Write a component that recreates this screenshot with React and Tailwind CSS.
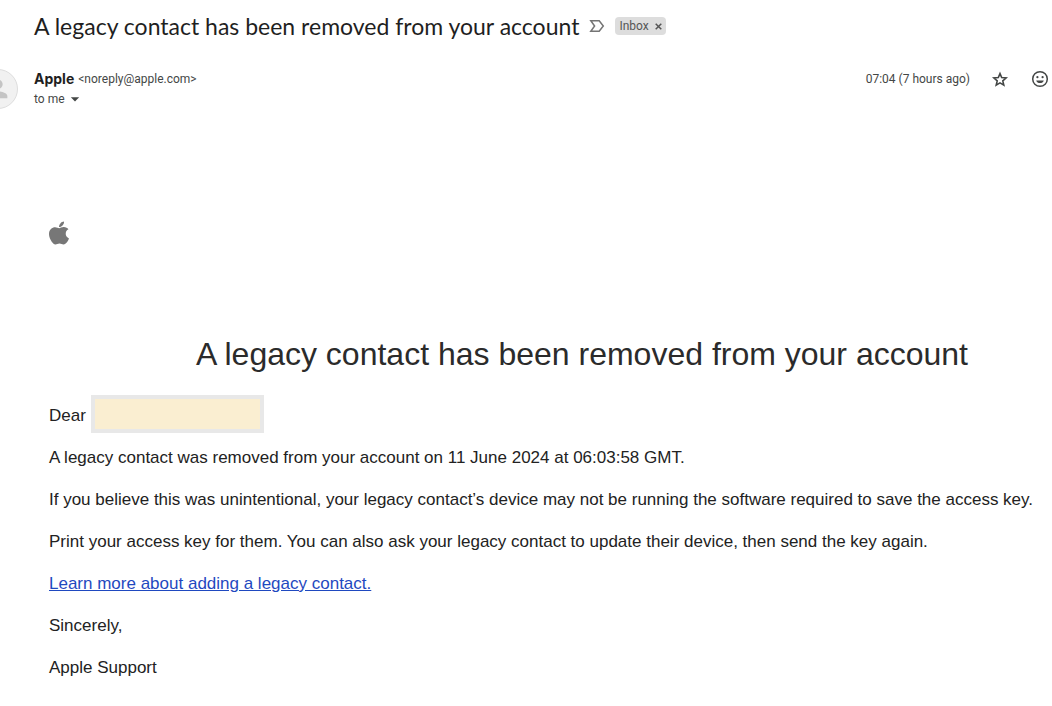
import { MdArrowDropDown, MdPerson } from 'react-icons/md'

const subject = 'A legacy contact has been removed from your account'

const paragraphs = [
  'A legacy contact was removed from your account on 11 June 2024 at 06:03:58 GMT.',
  'If you believe this was unintentional, your legacy contact’s device may not be running the software required to save the access key.',
  'Print your access key for them. You can also ask your legacy contact to update their device, then send the key again.',
]

function AppleLogo() {
  return (
    <svg width="20" height="24" viewBox="0 0 376 470" preserveAspectRatio="none" fill="currentColor" role="img" aria-label="Apple">
      <path d="M314.700 248.700c-.2-36.700 16.400-64.400 50-84.800-18.800-26.900-47.200-41.700-84.700-44.600-35.500-2.800-74.300 20.700-88.500 20.700-15 0-49.400-19.700-76.400-19.700C59.300 121.200 0 164.800 0 253.500c0 26.200 4.800 53.300 14.400 81.200 12.800 36.700 59 126.700 107.200 125.200 25.200-.6 43-17.900 75.800-17.900 31.800 0 48.300 17.900 76.400 17.900 48.600-.7 90.400-82.500 102.600-119.300-65.200-30.700-61.700-90-61.700-91.900zM258.100 84.500c27.300-32.400 24.800-61.900 24-72.500-24.100 1.400-52 16.400-67.900 34.900-17.500 19.800-27.800 44.300-25.600 71.900 26.100 2 49.900-11.400 69.500-34.300z" />
    </svg>
  )
}

function StarIcon() {
  return (
    <svg width="20" height="20" viewBox="0 0 20 20" fill="none" stroke="currentColor" strokeWidth="1.6">
      <path d="M10 4.600l1.700 4 4.400.4-3.300 2.900 1 4.300-3.800-2.300-3.800 2.300 1-4.300L3.900 9l4.400-.4z" />
    </svg>
  )
}

function SmileIcon() {
  return (
    <svg width="20" height="20" viewBox="0 0 20 20" fill="none" stroke="currentColor" strokeWidth="1.5">
      <circle cx="10" cy="10" r="7.300" />
      <circle cx="7.400" cy="8.200" r="1.100" fill="currentColor" stroke="none" />
      <circle cx="12.600" cy="8.200" r="1.100" fill="currentColor" stroke="none" />
      <path d="M6.200 11.400h7.600c-.6 1.700-2 2.700-3.800 2.700s-3.200-1-3.800-2.700z" fill="currentColor" stroke="none" />
    </svg>
  )
}

function SubjectBar() {
  return (
    <header className="flex items-center pl-[34px] pt-2.5">
      <h1 className="text-[23px] leading-8 text-[#1f1f1f]">{subject}</h1>
      <button type="button" aria-label="Mark as important" className="ml-2.5 text-[#757575]">
        <svg width="16" height="14" viewBox="0 0 16 14" fill="none" stroke="currentColor" strokeWidth="1.5">
          <path d="M1.800 1.700h8.400L14.300 7l-4.100 5.300H1.800L5.600 7z" />
        </svg>
      </button>
      <div className="ml-2.5 flex h-[18px] items-center gap-1.5 rounded bg-[#dddddd] px-1 font-[Roboto,sans-serif] text-xs text-[#555555]">
        <span>Inbox</span>
        <button type="button" aria-label="Remove label Inbox">
          <svg width="7" height="7" viewBox="0 0 7 7" stroke="currentColor" strokeWidth="1.5">
            <path d="M0.700 0.700l5.600 5.600M6.300 0.700L0.700 6.300" />
          </svg>
        </button>
      </div>
    </header>
  )
}

function SenderRow() {
  return (
    <div className="flex items-start pt-[27px] text-[#444746]">
      {/* Avatar, cut by the left edge */}
      <div className="-ml-[22px] flex size-10 shrink-0 items-center justify-center rounded-full border border-[#dddddd] bg-[#f1f1f1] text-[#c4c4c4]">
        <MdPerson size={28} />
      </div>

      <div className="ml-4 font-[Roboto,sans-serif] text-xs">
        <div className="flex items-center gap-1 leading-5">
          <span className="font-[Inter,sans-serif] text-sm font-bold text-[#1f1f1f]">Apple</span>
          <span>&lt;noreply@apple.com&gt;</span>
        </div>
        <button type="button" className="flex items-center leading-5">
          to me
          <MdArrowDropDown size={20} />
        </button>
      </div>

      <div className="ml-auto flex h-5 items-center pr-0.5">
        <time className="font-[Roboto,sans-serif] text-xs">07:04 (7 hours ago)</time>
        <button type="button" aria-label="Star" className="ml-5">
          <StarIcon />
        </button>
        <button type="button" aria-label="Add reaction" className="ml-5">
          <SmileIcon />
        </button>
      </div>
    </div>
  )
}

function MessageBody() {
  return (
    <main className="pb-6 pl-[49px] font-['Liberation_Sans',Arial,sans-serif] text-[17px] leading-[26px] text-[#222222]">
      <div className="pt-28 text-[#777777]">
        <AppleLogo />
      </div>

      <h2 className="mt-[89px] pb-5 pl-[63px] text-center text-[32px] leading-10 text-[#2b2b2b]">{subject}</h2>

      <div className="flex items-start gap-[5px] pt-px leading-[42px]">
        <span>Dear</span>
        <span className="h-[38px] w-[173px] border-4 border-[#e8e8e8] bg-[#faeed1]" />
      </div>
      {paragraphs.map((text) => (
        <p key={text} className="py-2">{text}</p>
      ))}
      <p className="py-2">
        <a href="#legacy-contact" className="text-[#1f49c0] underline">Learn more about adding a legacy contact.</a>
      </p>
      <p className="py-2">Sincerely,</p>
      <p className="py-2">Apple Support</p>
    </main>
  )
}

function App() {
  return (
    <div className="min-h-screen overflow-x-hidden bg-white font-[Lato,sans-serif]">
      <SubjectBar />
      <SenderRow />
      <MessageBody />
    </div>
  )
}

export default App
